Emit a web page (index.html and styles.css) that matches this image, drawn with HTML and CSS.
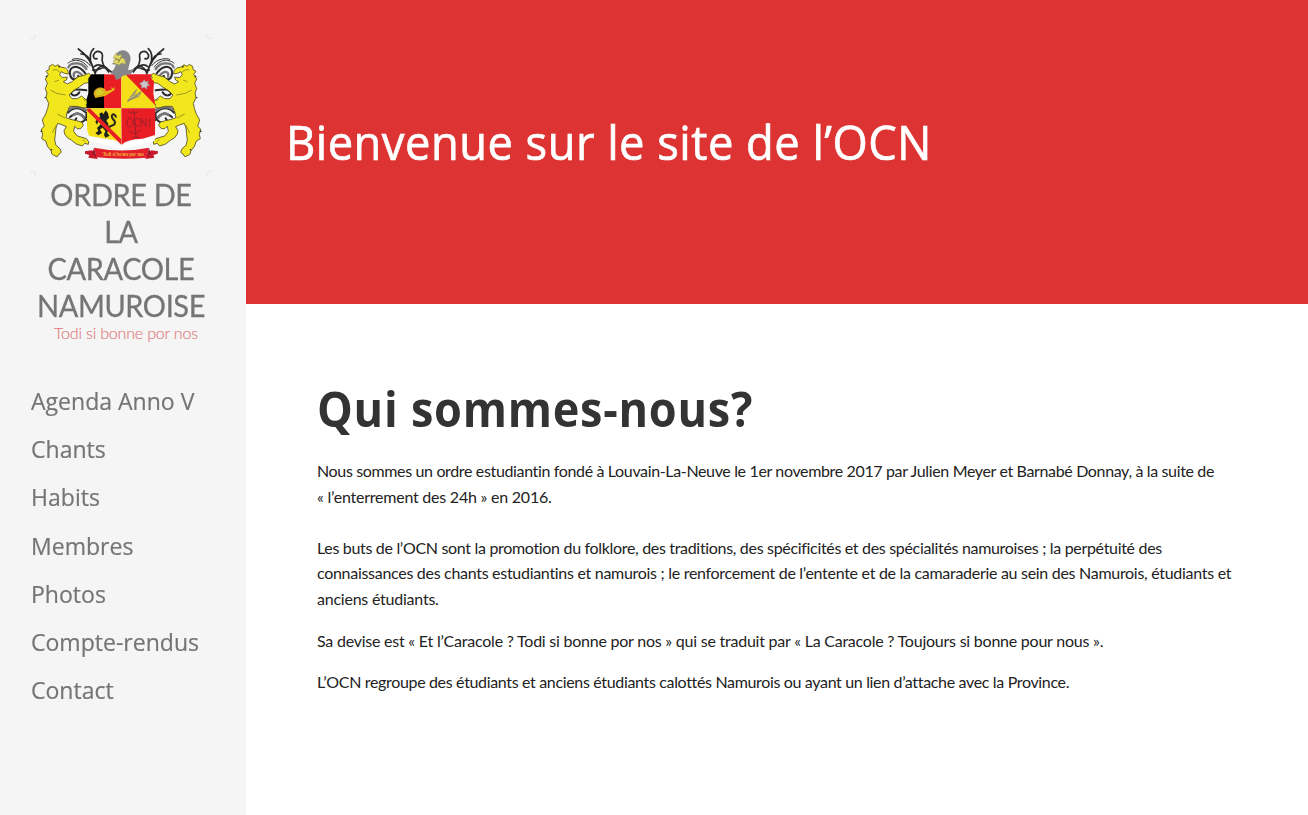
FILE: index.html
```html
<!DOCTYPE html>
<html lang="fr">
<head>
<meta charset="utf-8">
<title>Ordre de la Caracole Namuroise</title>
<link rel="stylesheet" href="styles.css">
</head>
<body>
<div class="page">
  <aside class="sidebar">
    <svg class="crest" viewBox="0 0 570 450" role="img" aria-label="Blason">
      <defs>
        <g id="side">
          <g fill="none" stroke="#29292b" stroke-linecap="round">
            <path stroke-width="5" d="M208 132C198 98 184 75 157 57M197 104C188 78 193 65 203 56M165 72C180 70 191 86 198 104M207 130C218 104 237 101 248 124M248 126C232 109 226 92 229 82C232 66 217 60 207 68C198 77 203 89 213 86"/>
            <path stroke-width="5" d="M200 120C217 124 225 109 241 114M204 110C218 98 232 108 256 126"/>
            <path stroke-width="6" d="M178 130C154 99 128 109 132 132C135 154 156 151 157 137"/>
            <path stroke="#77777b" stroke-width="7" d="M181 117C164 92 132 98 127 112M170 138C153 117 139 127 144 140"/>
            <path stroke-width="3" d="M185 111C163 82 139 90 126 99M193 107C175 84 150 84 139 88"/>
            <path stroke-width="6" d="M135 188C145 172 160 180 181 181M132 188C140 199 152 199 160 187M126 248C143 230 164 233 181 249M132 261C149 246 164 245 181 270M151 265C143 274 149 283 164 278C176 274 184 263 181 253"/>
            <path stroke="#77777b" stroke-width="8" d="M130 238C148 224 166 233 180 240M143 255C154 246 167 254 174 264"/>
          </g>
          <path transform="translate(30 42)" fill="#f2e71c" stroke="#504b20" stroke-width="2.5" stroke-linejoin="round" d="M50 61L57 67L66 62L74 69L88 72L96 80L97 90L86 88L75 83L71 92L79 101L94 99L91 108L82 113L94 120L108 113L125 99L144 94L158 88L165 94L161 102L168 108L159 116L145 118L130 129L112 140L99 153L108 164L124 164L137 156L147 165L158 170L160 181L150 182L155 190L144 192L122 187L101 187L93 206L90 221L108 227L122 230L138 235L142 244L134 254L124 254L116 247L113 262L124 276L138 280L151 284L158 293L157 301L146 298L139 306L121 300L107 289L94 281L86 270L84 260L91 248L80 243L65 238L60 252L58 272L56 288L60 304L72 314L76 325L69 330L64 338L53 334L47 329L46 321L35 308L29 291L17 284L20 272L16 255L25 247L19 228L29 210L35 193L38 178L30 161L33 147L28 134L34 118L28 105L37 91L30 82L39 77L40 67Z"/>
          <path fill="none" stroke="#77701e" stroke-width="2" d="M101 126L91 119L80 120M99 150L86 155M73 180L92 190L119 195M117 264L94 252M90 286L79 309M170 329L178 335M172 209L184 213"/>
          <path fill="#36351d" d="M96 107l8 2-5 5zM62 136l-4 4 7 2zM58 200l-4 5 8-1zM47 300l-5 5 7 1zM75 356l-2 6 7-3z"/>
        </g>
      </defs>
      <g fill="none" stroke="#dedede" stroke-width="2">
        <path d="M13 25H22Q28 25 28 14M557 25H548Q542 25 542 14M12 424H22Q28 424 28 437M557 424H548Q542 424 542 437"/>
      </g>
      <use href="#side"/>
      <use href="#side" transform="translate(570 0) scale(-1 1)"/>
      <path fill="#fff" d="M187 318L230 329L258 334L286 350L312 334L354 328L386 318L386 332L290 357L190 332Z"/>
      <path fill="#000" d="M196 133H235V235H182V207L187 190V145L191 140Z"/>
      <path fill="#e91d24" d="M234 133H286V235H234Z"/>
      <path fill="#f5df19" d="M286 133H302L388 224V235H286Z"/>
      <path fill="#e91d24" d="M298 133H377Q370 144 384 154L382 190L388 226Z"/>
      <path fill="#f5df19" d="M183 235H286V343Q281 331 250 328L190 318Q182 303 183 282Z"/>
      <path fill="#e91d24" d="M286 235H388L387 315L350 326Q303 327 287 344Z"/>
      <path fill="#e4b916" d="M203 193C203 169 236 167 240 184L257 179L256 171L262 176L265 169L266 180L237 198L208 204Z"/>
      <path fill="#d8cc27" stroke="#d08c1b" stroke-width="2" d="M207 197C205 177 219 171 231 179C241 189 230 202 207 197Z"/>
      <g stroke="#918d61" fill="#bcb888" stroke-width="2">
        <path d="M304 214L319 193L332 179L324 198L346 184L339 199L320 207Z"/>
        <path fill="none" stroke-width="3" d="M304 215L345 188M315 201L329 181M307 210L335 199"/>
      </g>
      <path fill="#ccc6ca" stroke="#99868a" stroke-width="2" d="M355 149L359 156L367 153L365 161L371 165L363 169L362 177L355 172L347 175L347 166L340 160L349 157Z"/>
      <path fill="#1e201c" d="M213 267L222 261L220 251L228 247L232 253L239 241L246 250L249 264L241 271L247 282L249 300L243 308L251 317L238 323L234 314L238 303L230 293L222 298L228 309L217 316L208 309L217 303L213 294L224 283L229 273L218 273L213 284L208 275Z"/>
      <path fill="none" stroke="#292920" stroke-width="6" d="M247 292L264 284C276 273 253 268 258 256C262 248 271 257 269 263"/>
      <path fill="#e91d24" d="M184 235L193 236L286 328V344L184 243Z"/>
      <g fill="none" stroke="#9b2028" stroke-width="3">
        <path d="M306 245L321 250L338 245M324 240L330 322M310 264Q298 273 305 287Q315 297 322 279Q320 263 310 264M341 268Q328 259 326 279Q328 293 340 287M345 290V265L360 290V265M371 265V290M309 303L326 312L345 300M318 322H340"/>
      </g>
      <path fill="#878789" d="M273 69C286 54 309 61 313 80C316 93 307 106 307 121L325 117L314 132L291 137L281 146L270 150L264 134L253 130L264 117L270 104L256 102L267 96Z"/>
      <path fill="#e4db61" stroke="#a7a05b" stroke-width="2" d="M264 80L271 68L273 77L286 74L287 83L296 88L299 103L287 99L280 105L266 100L262 92L272 90L261 84Z"/>
      <path stroke="#77733c" stroke-width="3" d="M268 84L280 91M286 80L277 98"/>
      <path fill="#c7192b" d="M177 364L198 361L211 375L215 387L187 383L190 375L177 371ZM396 364L375 361L363 375L358 387L385 383L382 375L395 371Z"/>
      <path fill="#e2202b" d="M204 353Q286 370 369 353L362 383Q286 390 212 382Z"/>
      <path fill="#971626" d="M204 353L212 382L199 370ZM369 353L362 383L374 370Z"/>
      <text class="motto" x="230" y="378" textLength="124" lengthAdjust="spacingAndGlyphs">Todi si bonne por nos</text>
    </svg>
    <h1 class="brand">ORDRE DE<br>LA<br>CARACOLE<br>NAMUROISE</h1>
    <p class="tagline">Todi si bonne por nos</p>
    <nav class="menu">
      <a>Agenda Anno V</a><a>Chants</a><a>Habits</a><a>Membres</a><a>Photos</a><a>Compte-rendus</a><a>Contact</a>
    </nav>
  </aside>
  <main class="main">
    <header class="hero"><h2 class="hero-title">Bienvenue sur le site de l’OCN</h2></header>
    <article class="content">
      <h2 class="heading">Qui sommes-nous?</h2>
      <p><span class="tight">Nous sommes un ordre estudiantin fondé à Louvain-La-Neuve le 1er novembre 2017 par Julien Meyer et Barnabé Donnay, à la suite de</span><br><span class="loose">« l’enterrement des 24h » en 2016.</span><br><br><span class="medium">Les buts de l’OCN sont la promotion du folklore, des traditions, des spécificités et des spécialités namuroises ; la perpétuité des</span><br><span class="normal">connaissances des chants estudiantins et namurois ; le renforcement de l’entente et de la camaraderie au sein des Namurois, étudiants et</span><br><span class="loose">anciens étudiants.</span></p>
      <p><span class="loose">Sa devise est « Et l’Caracole ? Todi si bonne por nos » qui se traduit par « La Caracole ? Toujours si bonne pour nous ».</span></p>
      <p><span class="last">L’OCN regroupe des étudiants et anciens étudiants calottés Namurois ou ayant un lien d’attache avec la Province.</span></p>
    </article>
  </main>
</div>
</body>
</html>
```
FILE: styles.css
```css
* { box-sizing: border-box; }
body { margin: 0; background: #fff; font-family: Lato, sans-serif; overflow: hidden; }
.page { display: flex; height: 815px; }
.sidebar { width: 246px; flex: none; background: #f5f5f5; padding-top: 30px; }
.crest { display: block; width: 190px; height: 150px; margin-left: 26px; filter: blur(.35px); }
.motto { font: bold 16px "Liberation Serif", serif; fill: #f0b33a; }
.brand { margin: -4px 4px 0 0; font-size: 30px; font-weight: 400; line-height: 37px; color: #757575; text-align: center; letter-spacing: -.4px; transform: scaleX(.965); -webkit-text-stroke: .3px #757575; }
.tagline { margin: -1px 0 0 54px; font-size: 16px; line-height: 20px; font-weight: 300; color: #e07a7d; white-space: nowrap; letter-spacing: -.18px; -webkit-text-stroke: .15px #e07a7d; }
.menu { display: flex; flex-direction: column; margin: 34px 0 0 31px; font: 24px/48.2px "Open Sans", sans-serif; color: #757575; white-space: nowrap; transform: scaleX(.96); transform-origin: left; -webkit-text-stroke: .2px #757575; }
.main { flex: 1; min-width: 0; }
.hero { height: 304px; background: #dd3333; padding: 109px 0 0 40px; }
.hero-title { margin: 0; font: 400 47.5px/65px "Open Sans", sans-serif; color: #fff; white-space: nowrap; letter-spacing: .5px; transform: scaleX(.954); transform-origin: left; -webkit-text-stroke: .7px #fff; }
.content { padding: 72px 0 0 71px; color: #222; font-size: 16px; line-height: 25.6px; white-space: nowrap; }
.content p { margin: 0 0 16px; }
.heading { margin: 0 0 17px; font: 700 47.5px/65px "Open Sans", sans-serif; color: #333; letter-spacing: .8px; transform: scaleX(.948); transform-origin: left; }
.tight { letter-spacing: -.355px; }
.medium { letter-spacing: -.32px; }
.normal { letter-spacing: -.293px; }
.loose { letter-spacing: -.232px; }
.last { letter-spacing: -.34px; }
```
